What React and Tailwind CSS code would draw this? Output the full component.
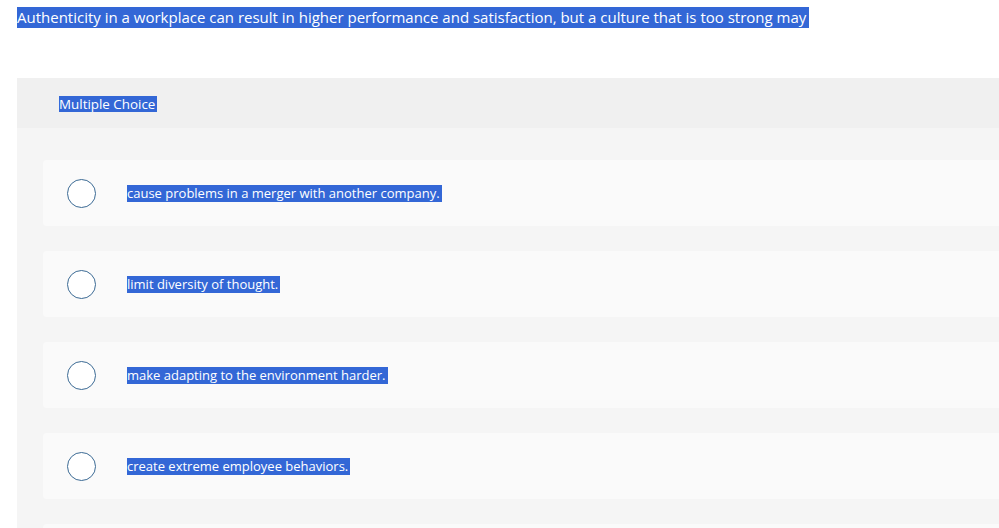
const choices = [
  'cause problems in a merger with another company.',
  'limit diversity of thought.',
  'make adapting to the environment harder.',
  'create extreme employee behaviors.',
  '',
];

const Sel = ({ children, className = '' }) => (
  <span className={`bg-[#3367d6] text-white ${className}`}>{children}</span>
);

export default function App() {
  return (
    <div className="h-[528px] overflow-hidden bg-white font-['Open_Sans',sans-serif] text-[#333]">
      <div className="flex h-[28px] items-end pl-[17px]">
        <Sel className="text-[15px] leading-[21px] pr-[3px] block">
          Authenticity in a workplace can result in higher performance and satisfaction, but a culture that is too strong may
        </Sel>
      </div>
      <div className="ml-[17px] mt-[50px] rounded-tl-[3px] bg-[#f5f5f5]">
        <div className="flex h-[50px] items-start bg-[#f0f0f0] pl-[42px] pt-[18px]">
          <Sel className="text-[13.4px] leading-[16px] block pr-[2px]">Multiple Choice</Sel>
        </div>
        <div className="flex flex-col gap-[25px] pl-[26px] pt-[32px]">
          {choices.map((c, i) => (
            <div key={i} className="flex h-[66px] items-center rounded-l-[4px] bg-[#fafafa]">
              <div className="ml-[24px] h-[29px] w-[29px] shrink-0 rounded-full border-[1.5px] border-[#3b6a94] bg-white" />
              {c && (
                <Sel className="ml-[31px] text-[13px] leading-[17px] block pr-[2px]">{c}</Sel>
              )}
            </div>
          ))}
        </div>
      </div>
    </div>
  );
}
